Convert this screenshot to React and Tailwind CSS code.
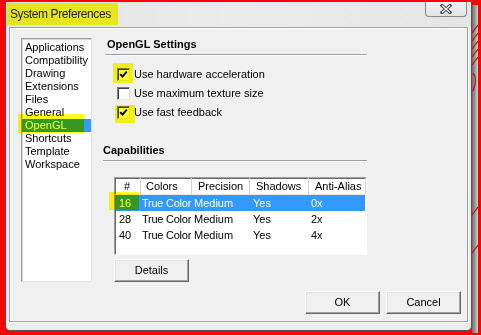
import React from "react";

const listItems = [
  "Applications",
  "Compatibility",
  "Drawing",
  "Extensions",
  "Files",
  "General",
  "OpenGL",
  "Shortcuts",
  "Template",
  "Workspace",
];

const columns = [
  { label: "#", width: "w-[25px]", pad: "pl-[8px]", cellPad: "pl-[3px]", key: "n" },
  { label: "Colors", width: "w-[51px]", pad: "pl-[5px]", cellPad: "pl-[1px] tracking-[-0.25px]", key: "colors" },
  { label: "Precision", width: "w-[58px]", pad: "pl-[6px]", cellPad: "pl-[2px]", key: "precision" },
  { label: "Shadows", width: "w-[59px]", pad: "pl-[6px]", cellPad: "pl-[3px]", key: "shadows" },
  { label: "Anti-Alias", width: "w-[57px]", pad: "pl-[6px]", cellPad: "pl-[2px]", key: "aa" },
];

const rows = [
  { n: "16", colors: "True Color", precision: "Medium", shadows: "Yes", aa: "0x" },
  { n: "28", colors: "True Color", precision: "Medium", shadows: "Yes", aa: "2x" },
  { n: "40", colors: "True Color", precision: "Medium", shadows: "Yes", aa: "4x" },
];

const Checkbox = ({ checked }) => (
  <span className="flex h-[13px] w-[13px] shrink-0 items-center justify-center border border-t-[#808080] border-l-[#808080] border-r-[#e3e3e3] border-b-[#e3e3e3] bg-white shadow-[inset_1px_1px_0_#404040]">
    {checked && (
      <svg width="9" height="9" viewBox="0 0 9 9">
        <path d="M1.2 4.2 L3.5 6.6 L7.8 1.6" stroke="#000" strokeWidth="1.9" fill="none" />
      </svg>
    )}
  </span>
);

const Button = ({ children }) => (
  <button className="flex h-[23px] w-[75px] items-center justify-center border border-t-white border-l-white border-r-[#696969] border-b-[#696969] bg-[#f0f0f0] text-[11px] text-black shadow-[inset_-1px_-1px_0_#a0a0a0,inset_1px_1px_0_#e3e3e3]">
    {children}
  </button>
);

const Highlight = ({ className }) => (
  <div className={"pointer-events-none absolute bg-[#ffff22] mix-blend-multiply " + className} />
);

const App = () => {
  return (
    <div className="relative flex h-[335px] w-[481px] overflow-hidden bg-[#ff0000] pt-[2px] pl-[5px] pb-[4px] pr-[3px] font-['Liberation_Sans',Arial,sans-serif] text-[11px] leading-[13px] text-black">
      {/* window */}
      <div className="flex h-[329px] w-[467px] flex-col rounded-b-[5px] border border-t-0 border-[#555] bg-[#ececec]">
        <div className="flex h-[25px] items-start justify-between bg-gradient-to-r from-[#e4e4e4] via-[#ebebeb] to-[#e6e6e6]">
          <span className="pl-[4px] pt-[5px] text-[12px] leading-[14px] tracking-[-0.4px] text-[#222]">
            System Preferences
          </span>
          <div className="mr-[4px] flex h-[15px] w-[42px] items-center justify-center rounded-b-[4px] border border-t-0 border-[#8a8a8a] bg-gradient-to-b from-[#f4f4f4] to-[#e2e2e2]">
            <svg width="14" height="10" viewBox="0 0 14 10">
              <path d="M3 1.5 L11 8.5 M11 1.5 L3 8.5" stroke="#4a4a4a" strokeWidth="3.2" strokeLinecap="square" />
              <path d="M3 1.5 L11 8.5 M11 1.5 L3 8.5" stroke="#f4f4f4" strokeWidth="1.2" />
            </svg>
          </div>
        </div>

        <div className="flex flex-1 px-[3px] pb-[8px]">
          {/* group frame */}
          <div className="flex h-[295px] w-[459px] flex-col border border-[#a0a0a0] bg-[#f0f0f0] pt-[10px] pl-[11px] pr-[6px] shadow-[inset_1px_1px_0_#fff,1px_1px_0_#fff]">
            <div className="flex h-[244px]">
              {/* list */}
              <div className="flex h-[244px] w-[71px] flex-col border border-t-[#a0a0a0] border-l-[#a0a0a0] border-r-[#e3e3e3] border-b-[#e3e3e3] bg-white pt-[2px] shadow-[inset_1px_1px_0_#d5d5d5]">
                {listItems.map((item) => (
                  <div
                    key={item}
                    className={
                      item === "OpenGL"
                        ? "h-[13px] bg-[#3399ff] pl-[3px] text-white"
                        : "h-[13px] pl-[3px]"
                    }
                  >
                    {item}
                  </div>
                ))}
              </div>

              {/* right column */}
              <div className="ml-[11px] flex w-[264px] flex-col">
                <div className="pl-[4px] font-bold">OpenGL Settings</div>
                <div className="ml-[2px] mt-[3px] h-[2px] border-t border-b border-t-[#a0a0a0] border-b-white" />
                <div className="mt-[9px] flex flex-col pl-[14px]">
                  <label className="flex h-[19px] items-center gap-[4px]">
                    <Checkbox checked />
                    <span>Use hardware acceleration</span>
                  </label>
                  <label className="flex h-[19px] items-center gap-[4px]">
                    <Checkbox />
                    <span>Use maximum texture size</span>
                  </label>
                  <label className="flex h-[19px] items-center gap-[4px]">
                    <Checkbox checked />
                    <span>Use fast feedback</span>
                  </label>
                </div>

                <div className="mt-[22px] font-bold">Capabilities</div>
                <div className="mt-[3px] h-[2px] border-t border-b border-t-[#a0a0a0] border-b-white" />

                <div className="ml-[11px] mt-[15px] flex h-[79px] w-[253px] flex-col border border-t-[#a0a0a0] border-l-[#a0a0a0] border-r-white border-b-white bg-white shadow-[inset_1px_1px_0_#696969]">
                  <div className="flex h-[17px] border-b border-[#e5e5e5] pl-[1px]">
                    {columns.map((c) => (
                      <div key={c.label} className={c.width + " " + c.pad + " flex h-full items-center border-r border-[#d5d5d5]"}>
                        {c.label}
                      </div>
                    ))}
                  </div>
                  {rows.map((r, i) => (
                    <div
                      key={r.n}
                      className={
                        i === 0
                          ? "ml-[1px] flex h-[16px] w-[249px] items-center bg-[#3399ff] text-white"
                          : "ml-[1px] flex h-[16px] w-[249px] items-center"
                      }
                    >
                      {columns.map((c) => (
                        <div key={c.key} className={c.width + " " + c.cellPad + " shrink-0 whitespace-nowrap"}>
                          {r[c.key]}
                        </div>
                      ))}
                    </div>
                  ))}
                </div>

                <div className="ml-[11px] mt-[4px]">
                  <Button>Details</Button>
                </div>
              </div>
            </div>

            <div className="mt-[9px] flex justify-end gap-[6px]">
              <Button>OK</Button>
              <Button>Cancel</Button>
            </div>
          </div>
        </div>
      </div>

      {/* shadow strip on the right */}
      <div className="relative mt-[3px] h-[328px] w-[6px] bg-gradient-to-r from-[#6a6a6a] via-[#9a9a9a] to-[#cfcfcf]">
        <svg className="absolute left-0 top-0" width="6" height="328" viewBox="0 0 6 328">
          <g stroke="#e00000" strokeWidth="1.2">
            <path d="M0 28 L6 20" />
            <path d="M0 36 L6 28" />
            <path d="M0 44 L6 36" />
            <path d="M0 52 L6 44" />
            <path d="M0 60 L6 52" />
            <path d="M1 68 Q6 74 1 86" fill="none" />
            <path d="M0 210 L6 202" />
            <path d="M0 248 L6 240" />
          </g>
        </svg>
      </div>

      {/* highlighter marks */}
      <Highlight className="left-[7px] top-[3px] h-[22px] w-[111px]" />
      <Highlight className="left-[113px] top-[63px] h-[20px] w-[20px]" />
      <Highlight className="left-[115px] top-[105px] h-[18px] w-[20px]" />
      <Highlight className="left-[18px] top-[114px] h-[19px] w-[66px]" />
      <Highlight className="left-[109px] top-[192px] h-[18px] w-[30px]" />
    </div>
  );
};

export default App;
